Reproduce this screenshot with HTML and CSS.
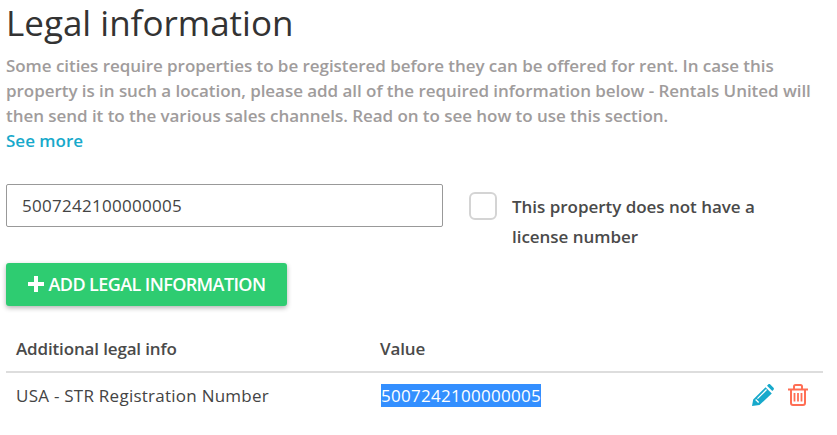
FILE: index.html
```html
<!DOCTYPE html>
<html lang="en">
<head>
    <meta charset="UTF-8">
    <title>Legal information</title>
    <link rel="stylesheet" href="styles.css">
</head>
<body>
    <div class="legal-section">
        <h1 class="title">Legal information</h1>
        <p class="intro">Some cities require properties to be registered before they can be offered for rent. In case this property is in such a location, please add all of the required information below - Rentals United will then send it to the various sales channels. Read on to see how to use this section.</p>
        <a class="see-more" href="#">See more</a>

        <div class="license-row">
            <input class="license-input" value="5007242100000005">
            <div class="no-license">
                <span class="checkbox"></span>
                <span class="no-license-label">This property does not have a license number</span>
            </div>
        </div>

        <button class="add-button">
            <svg class="plus" width="16" height="16" viewBox="0 0 16 16"><path fill="white" d="M6 0h4v6h6v4h-6v6H6v-6H0V6h6z"/></svg>
            ADD LEGAL INFORMATION
        </button>

        <div class="table-head">
            <div class="col-name">Additional legal info</div>
            <div class="col-value">Value</div>
        </div>
        <div class="table-row">
            <div class="col-name">USA - STR Registration Number</div>
            <div class="col-value"><span class="selected">5007242100000005</span></div>
            <div class="actions">
                <svg width="22" height="22" viewBox="0 0 22 22"><path fill="#17a9cb" d="M0 22l1.200-6.500L13.500 3.200l6.300 6.300L7.500 21zM3.200 16l3 3 .9-.9-3-3zM5 14.200l.9.9L15 6l-.9-.9zM15 1.700l1.200-1.200c.6-.6 1.500-.6 2.100 0l3.200 3.200c.6.6.6 1.500 0 2.100l-1.200 1.200z"/></svg>
                <svg width="20" height="22" viewBox="0 0 20 22"><path fill="none" stroke="#ff6e54" stroke-width="2" d="M0 5.500h20M6 5.500V2.500c0-.8.5-1.500 1.500-1.500h5c1 0 1.500.7 1.500 1.500v3M3 5.500V19c0 1.200.8 2 2 2h10c1.200 0 2-.8 2-2V5.500"/><path fill="none" stroke="#ff6e54" stroke-width="1.800" d="M6.500 9v8.500M10 9v8.500M13.500 9v8.500"/></svg>
            </div>
        </div>
    </div>
</body>
</html>
```

FILE: styles.css
```css
body {
    margin: 0;
    background-color: white;
    font-family: "Open Sans", sans-serif;
    overflow: hidden;
}

.legal-section {
    width: 817px;
    padding-left: 6px;
}

.title {
    margin: 0;
    font-size: 35px;
    font-weight: 400;
    line-height: 46px;
    color: #333;
}

.intro {
    margin: 7px 0 0;
    font-size: 17px;
    font-weight: 600;
    line-height: 25px;
    letter-spacing: -0.05px;
    color: #a09c9c;
}

.see-more {
    display: block;
    font-size: 17px;
    font-weight: 600;
    line-height: 25px;
    color: #17a9cb;
    text-decoration: none;
}

.license-row {
    display: flex;
    margin-top: 31px;
}

.license-input {
    box-sizing: border-box;
    width: 437px;
    height: 43px;
    padding: 0 15px;
    border: 1px solid #999;
    border-radius: 2px;
    font-family: inherit;
    font-size: 17px;
    letter-spacing: 0.28px;
    color: #444;
}

.no-license {
    display: flex;
    margin-left: 26px;
    margin-top: 8px;
}

.checkbox {
    flex: none;
    box-sizing: border-box;
    width: 28px;
    height: 28px;
    border: 2px solid #d4d4d4;
    border-radius: 6px;
}

.no-license-label {
    width: 270px;
    margin-left: 15px;
    font-size: 17px;
    font-weight: 600;
    line-height: 30px;
    letter-spacing: -0.03px;
    color: #4a4a4a;
}

.add-button {
    display: flex;
    align-items: center;
    justify-content: center;
    gap: 5px;
    height: 43px;
    width: 281px;
    margin-top: 11px;
    border: none;
    border-radius: 3px;
    background-color: #2ecc71;
    box-shadow: 0 2px 5px rgba(0, 0, 0, 0.3);
    font-family: inherit;
    font-size: 18px;
    font-weight: 600;
    letter-spacing: -0.6px;
    color: white;
    padding: 0 0 2px;
}

.table-head,
.table-row {
    display: flex;
    align-items: center;
    font-size: 17px;
    color: #444;
}

.table-head {
    height: 45px;
    margin-top: 20px;
    border-bottom: 2px solid #ddd;
    font-weight: 600;
    letter-spacing: -0.15px;
    color: #4a4a4a;
}

.table-row {
    height: 44px;
    padding-bottom: 2px;
}

.table-row .col-name {
    letter-spacing: 0.25px;
}

.col-name {
    width: 364px;
    padding-left: 10px;
}

.col-value {
    flex: 1;
}

.selected {
    margin-left: 1px;
    background-color: #338fff;
    color: white;
    letter-spacing: 0.28px;
}

.actions {
    display: flex;
    gap: 14px;
    padding-right: 15px;
}
```
